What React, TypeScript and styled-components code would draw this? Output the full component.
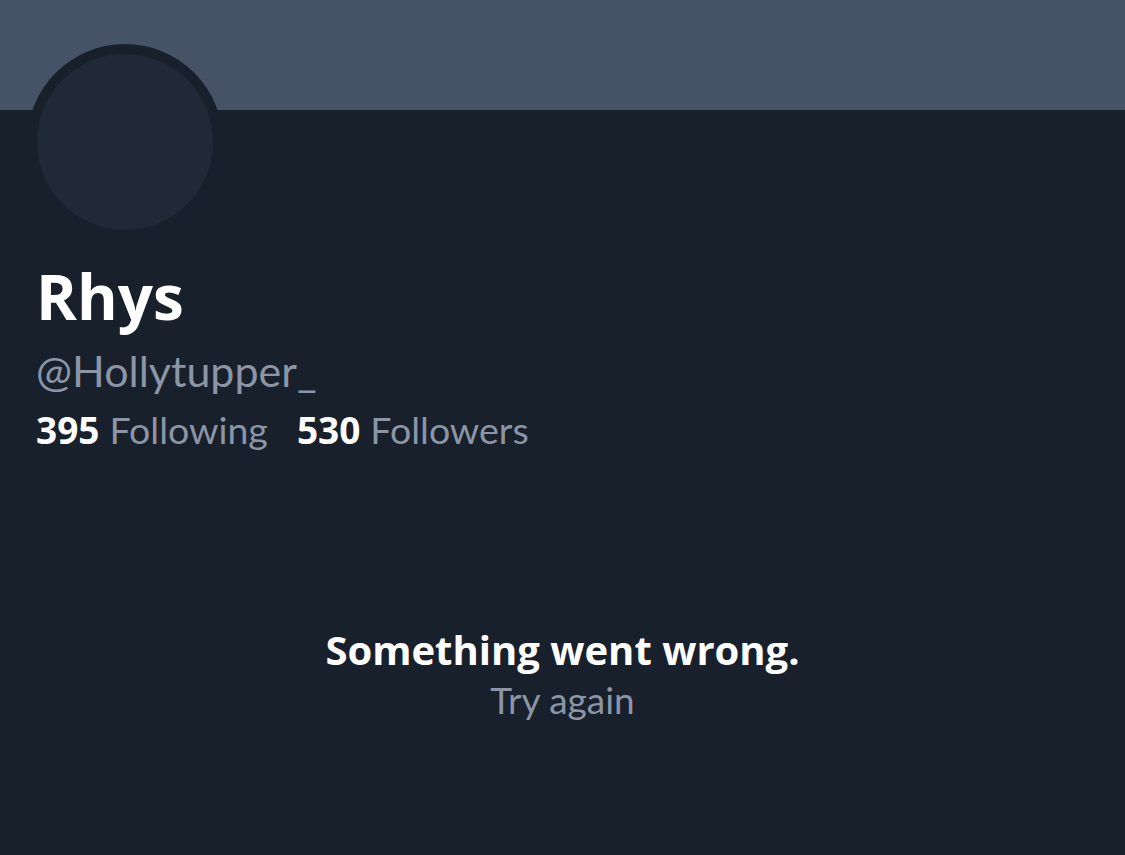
import React from "react";
import styled, { createGlobalStyle } from "styled-components";

const Global = createGlobalStyle`
  html, body { margin: 0; padding: 0; background: #18202b; }
  body { font-family: "Open Sans", "Noto Sans", sans-serif; }
`;

const Page = styled.div`
  width: 1125px;
  height: 855px;
  background: #18202b;
  overflow: hidden;
  display: flex;
  flex-direction: column;
`;

const Banner = styled.div`
  height: 110px;
  background: #465366;
  flex-shrink: 0;
`;

const Avatar = styled.div`
  width: 176px;
  height: 176px;
  border-radius: 50%;
  background: #1f2937;
  border: 10px solid #18202b;
  margin: -66px 0 0 27px;
  flex-shrink: 0;
`;

const Info = styled.div`
  padding-left: 36px;
  display: flex;
  flex-direction: column;
`;

const Name = styled.div`
  font-family: "Open Sans", sans-serif;
  font-size: 62px;
  line-height: 72px;
  font-weight: 700;
  color: #ffffff;
  margin-top: 20px;
`;

const Handle = styled.div`
  font-family: "Lato", sans-serif;
  font-size: 43px;
  line-height: 56px;
  color: #8b95a6;
  margin-top: 11px;
`;

const Stats = styled.div`
  display: flex;
  gap: 29px;
  margin-top: 7px;
  height: 48px;
`;

const Stat = styled.div`
  display: flex;
  align-items: baseline;
  gap: 10px;
  line-height: 48px;
`;

const Count = styled.span`
  font-family: "Open Sans", sans-serif;
  font-size: 37px;
  font-weight: 700;
  color: #ffffff;
`;

const Label = styled.span`
  font-family: "Lato", sans-serif;
  font-size: 37.5px;
  color: #8b95a6;
`;

const ErrorBlock = styled.div`
  margin-top: 172px;
  display: flex;
  flex-direction: column;
  align-items: center;
`;

const ErrorTitle = styled.div`
  font-family: "Open Sans", sans-serif;
  font-size: 40px;
  line-height: 47px;
  font-weight: 700;
  color: #ffffff;
`;

const Retry = styled.div`
  font-family: "Lato", sans-serif;
  font-size: 37px;
  line-height: 50px;
  color: #8b95a6;
  margin-top: 2px;
`;

export default function App() {
  return (
    <Page>
      <Global />
      <Banner />
      <Avatar />
      <Info>
        <Name>Rhys</Name>
        <Handle>@Hollytupper_</Handle>
        <Stats>
          <Stat>
            <Count>395</Count>
            <Label>Following</Label>
          </Stat>
          <Stat>
            <Count>530</Count>
            <Label>Followers</Label>
          </Stat>
        </Stats>
      </Info>
      <ErrorBlock>
        <ErrorTitle>Something went wrong.</ErrorTitle>
        <Retry>Try again</Retry>
      </ErrorBlock>
    </Page>
  );
}
